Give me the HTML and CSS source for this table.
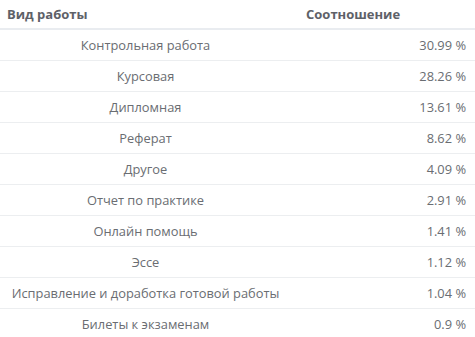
FILE: index.html
```html
<!DOCTYPE html>
<html lang="ru">
<head>
<meta charset="utf-8">
<link rel="stylesheet" href="styles.css">
</head>
<body>
<table class="stats">
  <thead>
    <tr><th class="c-type">Вид работы</th><th class="c-ratio">Соотношение</th></tr>
  </thead>
  <tbody>
    <tr><td class="c-type">Контрольная работа</td><td class="c-ratio">30.99 %</td></tr>
    <tr><td class="c-type">Курсовая</td><td class="c-ratio">28.26 %</td></tr>
    <tr><td class="c-type">Дипломная</td><td class="c-ratio">13.61 %</td></tr>
    <tr><td class="c-type">Реферат</td><td class="c-ratio">8.62 %</td></tr>
    <tr><td class="c-type">Другое</td><td class="c-ratio">4.09 %</td></tr>
    <tr><td class="c-type">Отчет по практике</td><td class="c-ratio">2.91 %</td></tr>
    <tr><td class="c-type">Онлайн помощь</td><td class="c-ratio">1.41 %</td></tr>
    <tr><td class="c-type">Эссе</td><td class="c-ratio">1.12 %</td></tr>
    <tr><td class="c-type">Исправление и доработка готовой работы</td><td class="c-ratio">1.04 %</td></tr>
    <tr><td class="c-type">Билеты к экзаменам</td><td class="c-ratio">0.9 %</td></tr>
  </tbody>
</table>
</body>
</html>
```
FILE: styles.css
```css
html, body {
  margin: 0;
  padding: 0;
  background: #fff;
}
body {
  font-family: "Open Sans", "DejaVu Sans", sans-serif;
  font-size: 12.85px;
  line-height: 16px;
  color: #6a6d72;
}
.stats {
  width: 475px;
  border-collapse: collapse;
}
.stats th {
  font-size: 13px;
  font-weight: 700;
  color: #5e6168;
  text-align: left;
  padding: 6px 7px;
  border-bottom: 2px solid #e9ecf0;
}
.stats th.c-type {
  width: 277px;
  padding-right: 15px;
}
.stats td {
  padding: 7px 9px 7px 7px;
  border-bottom: 1px solid #eceef0;
}
.stats tbody tr:last-child td {
  border-bottom: none;
}
.stats td.c-type {
  text-align: center;
  width: 277px;
  padding-right: 15px;
}
.stats td.c-ratio {
  text-align: right;
}
```
